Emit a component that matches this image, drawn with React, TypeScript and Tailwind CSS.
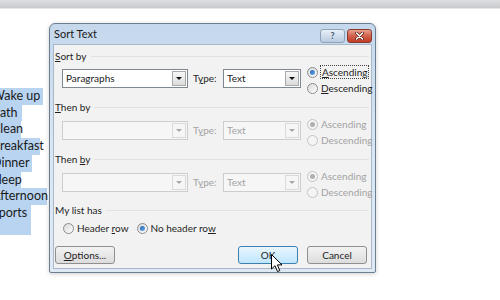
import React from 'react';

const docLines = [
    { text: 'Wake up', w: 'w-[51px]' },
    { text: 'Bath', w: 'w-[30px]' },
    { text: 'Clean', w: 'w-[29px]' },
    { text: 'Breakfast', w: 'w-[48px]' },
    { text: 'Dinner', w: 'w-[40px]' },
    { text: 'Sleep', w: 'w-[29px]' },
    { text: 'Afternoon', w: 'w-[55px]' },
    { text: 'Sports', w: 'w-[39px]' },
];

// Win7 style radio button
const Radio: React.FC<{ checked?: boolean; disabled?: boolean }> = ({ checked, disabled }) => (
    <span
        className={`flex items-center justify-center w-[11px] h-[11px] rounded-full border shrink-0 ${
            disabled ? 'border-[#c4c4c4] bg-[#f4f4f4]' : 'border-[#8a8d90] bg-gradient-to-br from-[#d8d8d8] to-[#ffffff]'
        }`}
    >
        {checked && (
            <span
                className={`w-[5px] h-[5px] rounded-full ${
                    disabled ? 'bg-[#b0b0b0]' : 'bg-gradient-to-br from-[#1f5fae] to-[#6bb0ee]'
                }`}
            />
        )}
    </span>
);

const Combo: React.FC<{ value?: string; disabled?: boolean; width: string }> = ({ value, disabled, width }) => (
    <div
        className={`flex items-stretch h-[19px] border ${width} ${
            disabled ? 'border-[#cdcdcd] bg-[#f6f6f6] text-[#a3a3a3]' : 'border-[#7f8790] bg-white text-[#1b1b1b]'
        }`}
    >
        <span className="flex-1 pl-[3px] leading-[17px]">{value}</span>
        <span
            className={`flex items-center justify-center w-[14px] m-px border ${
                disabled ? 'border-[#dadada] bg-[#f6f6f6]' : 'border-[#a9a9a9] bg-gradient-to-b from-[#f7f7f7] to-[#dcdcdc]'
            }`}
        >
            <span
                className={`w-0 h-0 border-l-[3px] border-r-[3px] border-t-[3px] border-l-transparent border-r-transparent ${
                    disabled ? 'border-t-[#a8a8a8]' : 'border-t-[#111]'
                }`}
            />
        </span>
    </div>
);

const SectionLabel: React.FC<{ children: React.ReactNode; className?: string }> = ({ children, className }) => (
    <div className={`flex items-center h-[14px] pr-[2px] ${className ?? ''}`}>
        <span className="text-[#1e1e1e]">{children}</span>
        <span className="flex-1 h-px ml-[4px] bg-[#dfe3e6]" />
    </div>
);

const SortRow: React.FC<{ value?: string; disabled?: boolean; focused?: boolean; className?: string }> = ({
    value,
    disabled,
    focused,
    className,
}) => (
    <div className={`flex items-start h-[32px] pl-[7px] ${className ?? ''}`}>
        <div className="flex items-center mt-[5px]">
            <Combo value={value} disabled={disabled} width="w-[126px]" />
            <span className={`ml-[5px] w-[30px] ${disabled ? 'text-[#a3a3a3]' : 'text-[#1e1e1e]'}`}>
                T<u className="underline-offset-1">y</u>pe:
            </span>
            <Combo value="Text" disabled={disabled} width="w-[78px]" />
        </div>
        <div className={`flex flex-col ml-[6px] ${disabled ? 'text-[#a3a3a3]' : 'text-[#1e1e1e]'}`}>
            <div className="flex items-center h-[16px] gap-[2px]">
                <Radio checked disabled={disabled} />
                <span className={focused ? 'border border-dotted border-[#444] px-px leading-[12px]' : 'pl-px'}>
                    {disabled ? 'Ascending' : <><u className="underline-offset-1">A</u>scending</>}
                </span>
            </div>
            <div className="flex items-center h-[16px] gap-[3px]">
                <Radio disabled={disabled} />
                <span>{disabled ? 'Descending' : <><u className="underline-offset-1">D</u>escending</>}</span>
            </div>
        </div>
    </div>
);

const WinButton: React.FC<{ children: React.ReactNode; active?: boolean }> = ({ children, active }) => (
    <div
        className={`flex items-center justify-center w-[60px] h-[18px] rounded-[3px] border ${
            active
                ? 'border-[#3c7fb1] bg-gradient-to-b from-[#eaf6fd] to-[#bee6fd]'
                : 'border-[#8f8f8f] bg-gradient-to-b from-[#f3f3f3] to-[#dcdcdc]'
        } text-[#1e1e1e]`}
    >
        {children}
    </div>
);

const SortTextDialog: React.FC = () => (
    <div className="relative w-[327px] h-[250px] flex flex-col rounded-t-[6px] rounded-b-[2px] border border-[#6b7f93] bg-gradient-to-b from-[#c5d8ec] via-[#d9e6f3] to-[#dfe9f4] font-['Lato','Open_Sans',sans-serif] text-[10px] shadow-[0_1px_4px_rgba(0,0,0,0.2)]">
        {/* Title bar */}
        <div className="flex items-center h-[20px] pl-[4px] pr-[3px]">
            <span className="flex-1 text-[11px] text-[#1a1a1a]">Sort Text</span>
            <div className="flex gap-[2px] mt-[3px]">
                <div className="flex items-center justify-center w-[25px] h-[14px] rounded-[3px] border border-[#8ea3b9] bg-gradient-to-b from-[#e8eff7] to-[#b8cbe0] text-[9px] leading-none text-[#4a5b6d] font-bold">
                    ?
                </div>
                <div className="flex items-center justify-center w-[25px] h-[14px] rounded-[3px] border border-[#8a3b2f] bg-gradient-to-b from-[#e6a190] via-[#d1604b] to-[#c13d26]">
                    <svg width="9" height="8" viewBox="0 0 9 8">
                        <path d="M1.5 1 L7.5 7 M7.5 1 L1.5 7" stroke="#5a1d14" strokeWidth="3" strokeLinecap="round" />
                        <path d="M1.5 1 L7.5 7 M7.5 1 L1.5 7" stroke="#ffffff" strokeWidth="1.6" strokeLinecap="round" />
                    </svg>
                </div>
            </div>
        </div>

        {/* Body */}
        <div className="flex-1 mx-[3px] mb-[3px] border border-[#a7b8ca] bg-[#f2f2f2] pl-px pt-[4px]">
            <SectionLabel>
                <u className="underline-offset-1">S</u>ort by
            </SectionLabel>
            <SortRow value="Paragraphs" focused className="mt-px" />

            <SectionLabel className="mt-[4px]">
                <u className="underline-offset-1">T</u>hen by
            </SectionLabel>
            <SortRow disabled className="mt-[2px]" />

            <SectionLabel className="mt-[4px]">
                Then <u className="underline-offset-1">b</u>y
            </SectionLabel>
            <SortRow disabled className="mt-[2px]" />

            <SectionLabel className="mt-[3px]">My list has</SectionLabel>
            <div className="flex items-center h-[14px] mt-[4px] pl-[8px] text-[#1e1e1e]">
                <Radio />
                <span className="ml-[3px]">
                    Header <u className="underline-offset-1">r</u>ow
                </span>
                <span className="ml-[8px]">
                    <Radio checked />
                </span>
                <span className="ml-[3px]">
                    No header ro<u className="underline-offset-1">w</u>
                </span>
            </div>

            <div className="flex items-center justify-between mt-[11px] pr-[4px]">
                <WinButton>
                    <u className="underline-offset-1">O</u>ptions...
                </WinButton>
                <div className="flex gap-[9px]">
                    <WinButton active>OK</WinButton>
                    <WinButton>Cancel</WinButton>
                </div>
            </div>
        </div>

        {/* Mouse pointer over OK */}
        <svg className="absolute left-[221px] top-[230px]" width="12" height="19" viewBox="0 0 12 19">
            <path d="M0.5 0.5 L0.5 15 L4 11.7 L6.5 17.5 L8.8 16.6 L6.4 10.9 L11 10.9 Z" fill="#ffffff" stroke="#000000" strokeWidth="1" strokeLinejoin="round" />
        </svg>
    </div>
);

export default function App() {
    return (
        <div className="w-[500px] h-[300px] overflow-hidden bg-white">
            <div className="h-[9px] bg-gradient-to-b from-[#dcdee0] to-[#c8cacd] border-b border-[#e6e7e8]" />
            <div className="flex items-start">
                {/* Selected document text behind the dialog */}
                <div className="w-[48px] mt-[79px] overflow-hidden font-['Lato','Open_Sans',sans-serif] text-[12.5px] text-[#1a1a1a]">
                    {docLines.map((line, i) => (
                        <div
                            key={line.text}
                            className={`${line.w} -ml-[8px] pl-0 bg-[#b8d4f1] leading-[16.7px] ${
                                i === docLines.length - 1 ? 'pb-[13px]' : ''
                            }`}
                        >
                            {line.text}
                        </div>
                    ))}
                </div>
                <div className="ml-[1px] mt-[14px]">
                    <SortTextDialog />
                </div>
            </div>
        </div>
    );
}
